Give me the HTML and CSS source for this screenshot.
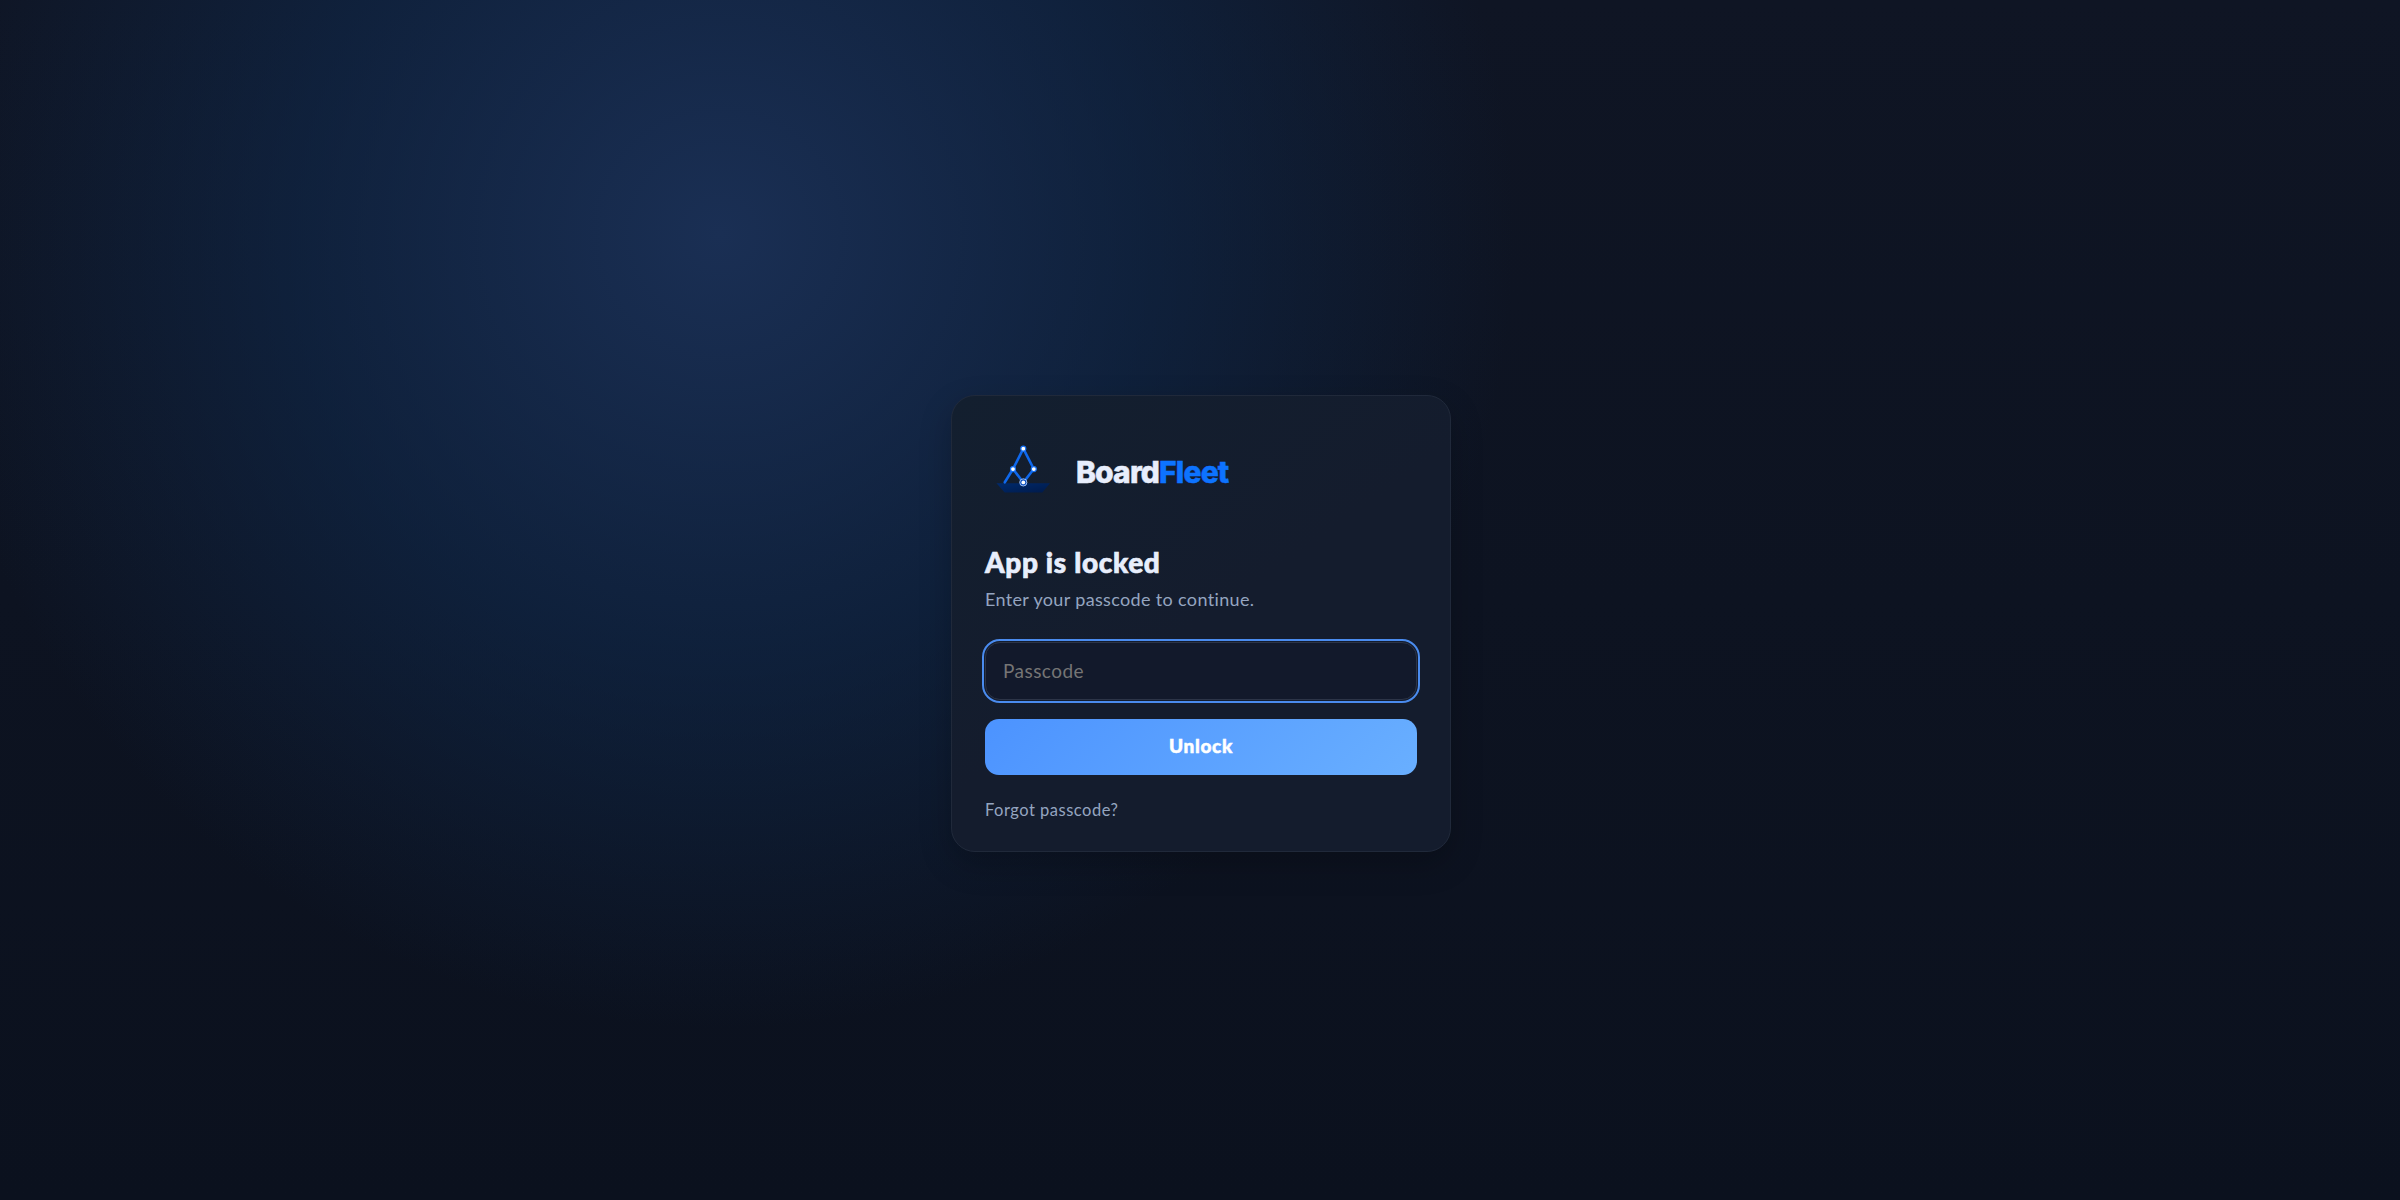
FILE: index.html
```html
<!DOCTYPE html>
<html lang="en">
<head>
    <meta charset="UTF-8">
    <meta name="viewport" content="width=device-width, initial-scale=1.0">
    <title>BoardFleet</title>
    <link rel="stylesheet" href="styles.css">
</head>
<body>
    <main class="lock-screen">
        <form class="lock-card">
            <div class="brand">
                <svg class="brand-mark" viewBox="0 0 76 76" aria-hidden="true">
                    <defs>
                        <linearGradient id="hull" x1="0" y1="0" x2="1" y2="1">
                            <stop offset="0" stop-color="#002a6c"/>
                            <stop offset="1" stop-color="#001a4a"/>
                        </linearGradient>
                    </defs>
                    <path d="M11.5 47.2H65l-7.7 9.3H19.7z" fill="url(#hull)"/>
                    <path class="mast" d="M19.8 46.3L28 33 38.3 12.7 48.8 33 38.3 46.5 28 33"/>
                    <circle class="node" cx="38.3" cy="12.7" r="2.5"/>
                    <circle class="node" cx="28" cy="33.1" r="2.5"/>
                    <circle class="node" cx="48.8" cy="33.1" r="2.5"/>
                    <circle class="ring" cx="38.3" cy="46.4" r="3.6"/>
                    <circle class="dot" cx="38.3" cy="46.4" r="1.9"/>
                </svg>
                <span class="brand-name">Board<span class="accent">Fleet</span></span>
            </div>
            <h1 class="title">App is locked</h1>
            <p class="subtitle">Enter your passcode to continue.</p>
            <input class="passcode" type="password" placeholder="Passcode" aria-label="Passcode">
            <button class="unlock" type="button">Unlock</button>
            <a class="forgot" href="#">Forgot passcode?</a>
        </form>
    </main>
</body>
</html>
```
FILE: styles.css
```css
* {
    box-sizing: border-box;
}

body {
    margin: 0;
    font-family: "Avenir Next", Lato, sans-serif;
    color: #e8eefc;
}

.lock-screen {
    display: flex;
    align-items: center;
    justify-content: center;
    min-height: 100vh;
    padding: 46px 0 0 2px;
    background: radial-gradient(circle at 30% 19.5%, #1a2f54, rgba(16, 44, 82, 0.52) 22%, rgba(12, 36, 60, 0) 41%),
                linear-gradient(180deg, #0f1524, #0b111e);
}

.lock-card {
    display: flex;
    flex-direction: column;
    width: 500px;
    height: 457px;
    padding: 40px 33px 0;
    background: linear-gradient(145deg, #131f2f, #141c2d 50%);
    border: 1px solid #20293a;
    border-radius: 24px;
    box-shadow: 0 12px 32px rgba(0, 0, 0, 0.22);
}

.brand {
    display: flex;
    align-items: center;
    height: 76px;
}

.brand-mark {
    width: 76px;
    height: 76px;
}

.mast {
    fill: none;
    stroke: #0f68ec;
    stroke-width: 2.6;
    stroke-linejoin: round;
    stroke-linecap: round;
}

.node {
    fill: #fff;
    stroke: #1671f5;
    stroke-width: 1.2;
}

.ring {
    fill: #0b4fc0;
    stroke: #a9c8f8;
    stroke-width: 0.9;
}

.dot {
    fill: #fff;
}

.brand-name {
    margin: -3px 0 0 15px;
    font-family: Inter, sans-serif;
    font-size: 30px;
    font-weight: 800;
    letter-spacing: -0.85px;
    -webkit-text-stroke: 0.5px;
}

.accent {
    color: #0d73ff;
}

.title {
    margin: 33px 0 0;
    font-size: 28px;
    line-height: 34px;
    font-weight: 900;
    letter-spacing: 0.65px;
    -webkit-text-stroke: 0.7px;
}

.subtitle {
    margin: 8px 0 0;
    font-size: 18px;
    line-height: 24px;
    letter-spacing: 0.35px;
    color: #95a5c0;
}

.passcode {
    height: 58px;
    margin: 31px 0 0;
    padding: 0 17px;
    font-family: inherit;
    font-size: 19px;
    letter-spacing: 0.45px;
    color: #e8eefc;
    background: #12192b;
    border: 1px solid #2c3447;
    border-radius: 15px;
    outline: 2px solid #4a8bee;
    outline-offset: 1px;
}

.passcode::placeholder {
    color: #757575;
    opacity: 1;
}

.unlock {
    height: 56px;
    margin: 19px 0 0;
    padding: 0 0 3px;
    font-family: inherit;
    font-size: 19px;
    font-weight: 900;
    letter-spacing: 0.7px;
    -webkit-text-stroke: 0.5px;
    color: #fff;
    background: linear-gradient(135deg, #4c93ff, #69afff);
    border: 0;
    border-radius: 14px;
}

.forgot {
    margin: 23px 0 0;
    font-size: 16.5px;
    line-height: 24px;
    letter-spacing: 0.5px;
    color: #95a5c0;
    text-decoration: none;
}
```
